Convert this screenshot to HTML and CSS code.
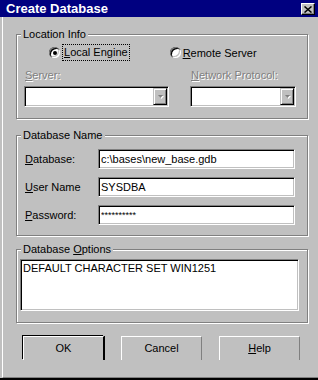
FILE: index.html
```html
<!doctype html>

<html lang="en">
    <head>
        <meta charset="utf-8">
        <title>Create Database</title>
        <link rel="stylesheet" href="styles.css">
    </head>
    <body>
        <div class="window">
            <div class="titlebar">
                <span class="title">Create Database</span>
                <span class="close">
                    <svg width="8" height="7" viewBox="0 0 8 7"><path d="M0.5 0.5l7 6M7.5 0.5l-7 6" stroke="#000" stroke-width="1.5" fill="none"/></svg>
                </span>
            </div>

            <div class="client">
                <!-- Location Info -->
                <div class="group group-location">
                    <span class="legend">Location Info</span>
                    <div class="radios">
                        <label class="radio radio-local">
                            <span class="dot checked"></span>
                            <span class="focus"><u>L</u>ocal Engine</span>
                        </label>
                        <label class="radio radio-remote">
                            <span class="dot"></span>
                            <span><u>R</u>emote Server</span>
                        </label>
                    </div>
                    <div class="combos">
                        <div class="combo-field field-server">
                            <div class="disabled"><u>S</u>erver:</div>
                            <div class="combo">
                                <span class="combo-btn"><svg width="5" height="3" viewBox="0 0 5 3"><path d="M0 0h5l-2.5 3z" fill="#808080"/></svg></span>
                            </div>
                        </div>
                        <div class="combo-field field-protocol">
                            <div class="disabled"><u>N</u>etwork Protocol:</div>
                            <div class="combo">
                                <span class="combo-btn"><svg width="5" height="3" viewBox="0 0 5 3"><path d="M0 0h5l-2.5 3z" fill="#808080"/></svg></span>
                            </div>
                        </div>
                    </div>
                </div>

                <!-- Database Name -->
                <div class="group group-name">
                    <span class="legend">Database Name</span>
                    <div class="row">
                        <span class="row-label"><u>D</u>atabase:</span>
                        <input class="field" type="text" value="c:\bases\new_base.gdb">
                    </div>
                    <div class="row">
                        <span class="row-label"><u>U</u>ser Name</span>
                        <input class="field" type="text" value="SYSDBA">
                    </div>
                    <div class="row">
                        <span class="row-label"><u>P</u>assword:</span>
                        <input class="field field-password" type="text" value="**********">
                    </div>
                </div>

                <!-- Database Options -->
                <div class="group group-options">
                    <span class="legend">Database <u>O</u>ptions</span>
                    <textarea class="field options-text">DEFAULT CHARACTER SET WIN1251</textarea>
                </div>

                <div class="buttons">
                    <button class="btn btn-default">OK</button>
                    <button class="btn">Cancel</button>
                    <button class="btn"><u>H</u>elp</button>
                </div>
            </div>
        </div>
    </body>
</html>
```
FILE: styles.css
```css
body {
    margin: 0;
    background: #c0c0c0;
    font-family: "Liberation Sans", Arial, sans-serif;
    font-size: 11px;
    color: #000;
}
.window {
    width: 318px;
    height: 380px;
    box-sizing: border-box;
    display: flex;
    flex-direction: column;
    background: #c0c0c0;
    border-bottom: 2px solid #000;
}

/* Title bar */
.titlebar {
    height: 17px;
    flex: none;
    display: flex;
    align-items: flex-start;
    background: #000080;
    padding: 0 3px 0 6px;
}
.title {
    color: #fff;
    font-weight: bold;
    font-size: 13px;
    line-height: 17px;
}
.close {
    margin-left: auto;
    margin-top: 3px;
    width: 14px;
    height: 12px;
    box-sizing: border-box;
    display: flex;
    align-items: center;
    justify-content: center;
    background: #c0c0c0;
    border: 1px solid;
    border-color: #fff #000 #000 #fff;
    box-shadow: inset -1px -1px #808080;
}

/* Client area, with the white frame line on the left */
.client {
    flex: 1;
    margin-left: 2px;
    border-left: 1px solid #fff;
    border-bottom: 1px solid #808080;
    padding-top: 17px;
}

/* Etched group boxes */
.group {
    position: relative;
    margin-left: 13px;
    width: 292px;
    box-sizing: border-box;
    border: 1px solid #808080;
    box-shadow: inset 1px 1px #fff, 1px 1px #fff;
}
.legend {
    position: absolute;
    top: -8px;
    left: 4px;
    padding: 0 2px;
    background: #c0c0c0;
    line-height: 14px;
}
.group-location {
    padding: 9px 0 11px 7px;
}
.group-name {
    margin-top: 16px;
    padding: 13px 0 10px 8px;
}
.group-options {
    margin-top: 13px;
    padding: 9px 0 11px 3px;
}

/* Radio buttons */
.radios {
    display: flex;
    height: 17px;
    align-items: center;
}
.radio {
    display: flex;
    align-items: center;
}
.radio-local {
    margin-left: 25px;
}
.radio-remote {
    margin-left: 40px;
}
.dot {
    position: relative;
    width: 11px;
    height: 11px;
    border-radius: 50%;
    background: #fff;
    box-shadow: inset 1px 1px #808080, inset 2px 2px #000, inset -1px -1px #fff, inset -2px -2px #c0c0c0;
    margin-right: 2px;
}
.dot.checked::after {
    content: "";
    position: absolute;
    left: 4px;
    top: 4px;
    width: 4px;
    height: 4px;
    border-radius: 50%;
    background: #000;
}
.focus {
    border: 1px dotted #000;
    padding: 1px 1px 1px 1px;
    line-height: 13px;
}

/* Disabled combo boxes */
.combos {
    display: flex;
    gap: 21px;
    margin-top: 8px;
}
.disabled {
    color: #808080;
    text-shadow: 1px 1px #fff;
    line-height: 13px;
    padding-left: 1px;
    margin-bottom: 4px;
}
.field-server .combo {
    width: 145px;
}
.field-protocol .combo {
    width: 106px;
}
.combo {
    height: 21px;
    box-sizing: border-box;
    display: flex;
    justify-content: flex-end;
    padding: 1px;
    background: #fff;
    border: 1px solid;
    border-color: #808080 #fff #fff #808080;
    box-shadow: inset 1px 1px #000, inset -1px -1px #c0c0c0;
}
.combo-btn {
    width: 14px;
    height: 17px;
    box-sizing: border-box;
    display: flex;
    align-items: center;
    justify-content: center;
    background: #c0c0c0;
    border: 1px solid;
    border-color: #c0c0c0 #000 #000 #c0c0c0;
    box-shadow: inset 1px 1px #fff, inset -1px -1px #808080;
}
.combo-btn svg {
    filter: drop-shadow(1px 1px 0 #fff);
}

/* Text fields */
.row {
    display: flex;
    align-items: center;
    height: 20px;
}
.row + .row {
    margin-top: 8px;
}
.row-label {
    width: 73px;
}
.field {
    box-sizing: border-box;
    background: #fff;
    border: 1px solid;
    border-color: #808080 #fff #fff #808080;
    box-shadow: inset 1px 1px #000, inset -1px -1px #c0c0c0;
    font-family: "Liberation Sans", Arial, sans-serif;
    font-size: 11px;
    color: #000;
    outline: none;
    margin: 0;
}
.row .field {
    width: 197px;
    height: 20px;
    padding: 0 2px;
}
.field-password {
    font-size: 9px;
}
.options-text {
    display: block;
    width: 279px;
    height: 52px;
    padding: 2px 2px;
    resize: none;
    overflow: hidden;
    line-height: 13px;
}

/* Push buttons */
.buttons {
    display: flex;
    gap: 17px;
    margin-top: 13px;
    padding-left: 20px;
}
.btn {
    width: 81px;
    height: 24px;
    box-sizing: border-box;
    background: #c0c0c0;
    border: 0;
    border-top: 1px solid #fff;
    border-left: 1px solid #fff;
    border-right: 1px solid #808080;
    font-family: "Liberation Sans", Arial, sans-serif;
    font-size: 11px;
    color: #000;
    padding: 0 0 2px;
}
.btn-default {
    border-right-color: #000;
    box-shadow: -1px -1px 0 #000, 1px 0 0 #000;
}
```
